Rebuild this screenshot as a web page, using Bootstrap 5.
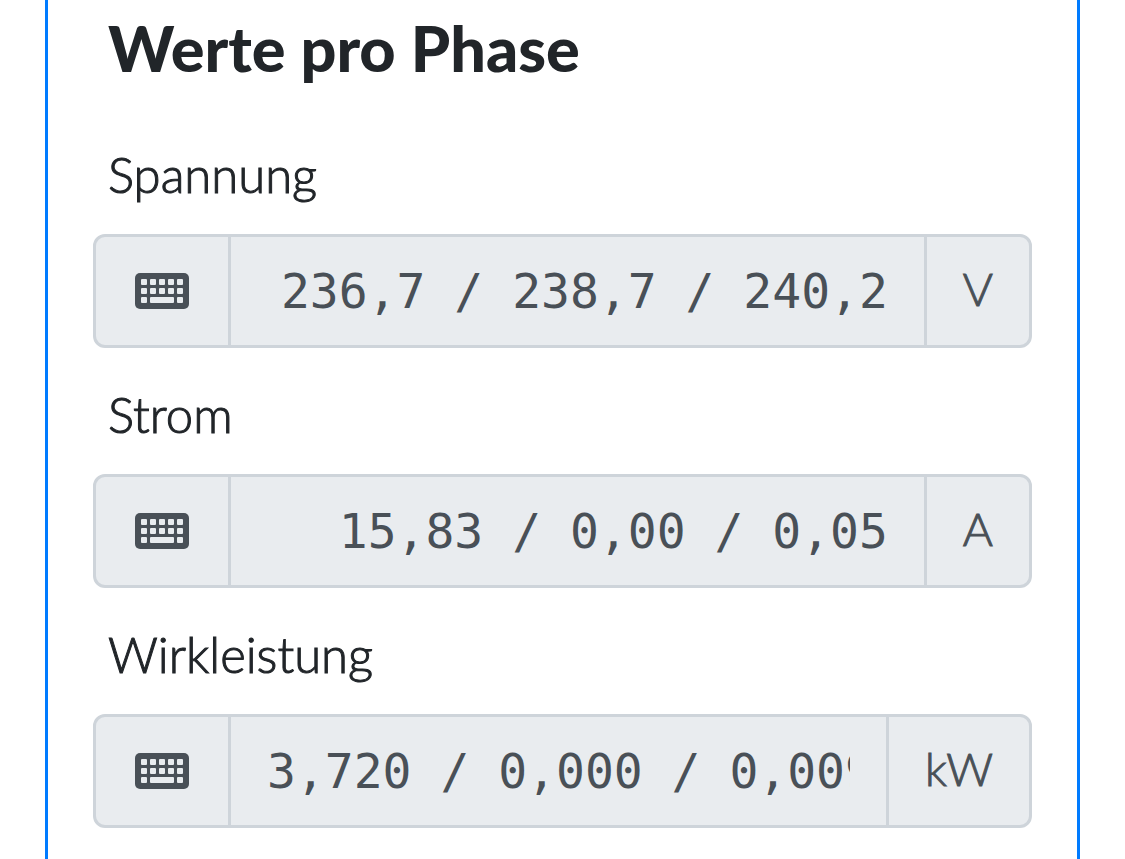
<!DOCTYPE html>
<html lang="de">
<head>
<meta charset="utf-8">
<meta name="viewport" content="width=device-width, initial-scale=1">
<title>Werte pro Phase</title>
<link href="https://cdn.jsdelivr.net/npm/bootstrap@5.3.0/dist/css/bootstrap.min.css" rel="stylesheet">
<script src="https://cdn.jsdelivr.net/npm/bootstrap@5.3.0/dist/js/bootstrap.bundle.min.js" defer></script>
<style>
body{font-family:Lato,"Liberation Sans",sans-serif;font-size:48px;font-weight:300;line-height:72px;color:#212529}
.panel{margin:0 45px;border:solid #007bff;border-width:0 3px;padding:0 45px}
.panel h2{font-size:63px;line-height:72px;font-weight:900;padding:12px 15px 0;margin:0 0 54px}
.form-label{display:block;font-size:49px;margin:0;padding:0 15px 24px;line-height:72px;-webkit-text-stroke:1px}
.input-group{padding-bottom:30px}
.input-group-text,.form-control{background:#e9ecef;border:3px solid #ced4da;color:#495057;font-size:48px;line-height:72px;border-radius:12px}
.input-group-text{font-size:46px;font-weight:300;padding:16px 36px 20px;-webkit-text-stroke:1px}
.input-group .key-cell{padding:18px 39px}
.key-cell svg{display:block}
.input-group>.form-control,.input-group>.unit-cell{margin-left:-3px!important}
.form-control{font-family:"DejaVu Sans Mono",monospace;font-weight:400;padding:18px 36px;text-align:right}
.form-control:focus{background:#e9ecef;color:#495057}
</style>
</head>
<body>
<svg class="d-none" aria-hidden="true">
<symbol id="keyboard" viewBox="0 0 54 36">
<path fill="currentColor" d="M5 0H49a5 5 0 0 1 5 5V31a5 5 0 0 1-5 5H5a5 5 0 0 1-5-5V5a5 5 0 0 1 5-5z"/>
<g fill="#e9ecef">
<rect x="6" y="6" width="6" height="6" rx="1"/><rect x="15" y="6" width="6" height="6" rx="1"/><rect x="24" y="6" width="6" height="6" rx="1"/><rect x="33" y="6" width="6" height="6" rx="1"/><rect x="42" y="6" width="6" height="6" rx="1"/>
<rect x="6" y="15" width="6" height="6" rx="1"/><rect x="15" y="15" width="6" height="6" rx="1"/><rect x="24" y="15" width="6" height="6" rx="1"/><rect x="33" y="15" width="6" height="6" rx="1"/><rect x="42" y="15" width="6" height="6" rx="1"/>
<rect x="6" y="24" width="6" height="6" rx="1"/><rect x="15" y="24" width="24" height="6" rx="1"/><rect x="42" y="24" width="6" height="6" rx="1"/>
</g>
</symbol>
</svg>
<main class="panel min-vh-100">
<h2>Werte pro Phase</h2>
<label class="form-label" for="spannung">Spannung</label>
<div class="input-group flex-nowrap">
<span class="input-group-text key-cell"><svg width="54" height="36" aria-hidden="true"><use href="#keyboard"/></svg></span>
<input id="spannung" type="text" class="form-control" readonly value="236,7 / 238,7 / 240,2">
<span class="input-group-text unit-cell">V</span>
</div>
<label class="form-label" for="strom">Strom</label>
<div class="input-group flex-nowrap">
<span class="input-group-text key-cell"><svg width="54" height="36" aria-hidden="true"><use href="#keyboard"/></svg></span>
<input id="strom" type="text" class="form-control" readonly value="15,83 / 0,00 / 0,05">
<span class="input-group-text unit-cell">A</span>
</div>
<label class="form-label" for="leistung">Wirkleistung</label>
<div class="input-group flex-nowrap">
<span class="input-group-text key-cell"><svg width="54" height="36" aria-hidden="true"><use href="#keyboard"/></svg></span>
<input id="leistung" type="text" class="form-control" readonly value="3,720 / 0,000 / 0,009">
<span class="input-group-text unit-cell">kW</span>
</div>
</main>
</body>
</html>
